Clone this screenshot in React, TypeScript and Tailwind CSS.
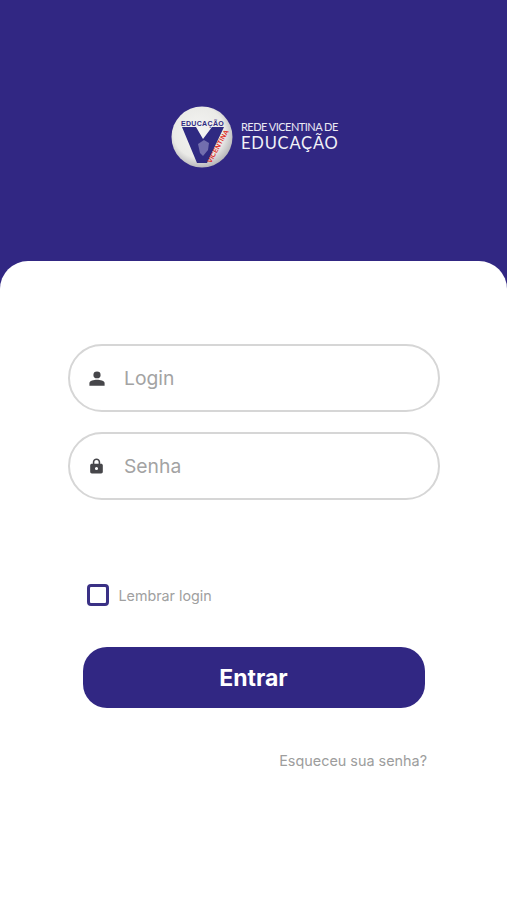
import React from "react";

function LogoMark() {
  return (
    <svg width="62" height="62" viewBox="0 0 62 62" className="shrink-0">
      <defs>
        <radialGradient id="ball" cx="45%" cy="42%" r="60%">
          <stop offset="0%" stopColor="#f5f5f3" />
          <stop offset="70%" stopColor="#eaeae7" />
          <stop offset="100%" stopColor="#b4b3b6" />
        </radialGradient>
      </defs>
      <circle cx="31" cy="31" r="30.5" fill="url(#ball)" />
      <path d="M11 21 L25 21 L32 33 L41 21 L53 21 L36 57 L26 57 Z" fill="#2f2a82" />
      <path d="M27 38 L33 34 L38 37 L37 44 L32 50 L29 47 Z" fill="#8f8cc0" opacity="0.7" />
      <text x="31.5" y="19.5" textAnchor="middle" fontSize="7" fontWeight="800" letterSpacing="0.35" fill="#2f2a82" fontFamily="'Liberation Sans', sans-serif">EDUCAÇÃO</text>
      <text transform="translate(40 57.5) rotate(-61)" fontSize="6.8" fontWeight="800" letterSpacing="0" fill="#e0302a" fontFamily="'Liberation Sans', sans-serif">VICENTINA</text>
    </svg>
  );
}

function UserIcon() {
  return (
    <svg width="16" height="15" viewBox="0 0 16 16" fill="#46464a" preserveAspectRatio="none">
      <circle cx="8" cy="4.2" r="3.6" />
      <path d="M0.4 15.8 V12.8 C0.4 10.4 5 9.3 8 9.3 C11 9.3 15.6 10.4 15.6 12.8 V15.8 Z" />
    </svg>
  );
}

function LockIcon() {
  return (
    <svg width="13" height="16" viewBox="0 0 14 18" fill="#46464a" preserveAspectRatio="none">
      <path fillRule="evenodd" d="M3 6.4 V4.6 C3 2.3 4.8 0.6 7 0.6 C9.2 0.6 11 2.3 11 4.6 V6.4 H12 C13 6.4 13.8 7.2 13.8 8.2 V15.6 C13.8 16.6 13 17.4 12 17.4 H2 C1 17.4 0.2 16.6 0.2 15.6 V8.2 C0.2 7.2 1 6.4 2 6.4 Z M4.7 6.4 H9.3 V4.6 C9.3 3.3 8.3 2.3 7 2.3 C5.7 2.3 4.7 3.3 4.7 4.6 Z M7 10.2 A1.7 1.7 0 1 0 7 13.6 A1.7 1.7 0 1 0 7 10.2 Z" />
    </svg>
  );
}

function Field({ icon, label }: { icon: React.ReactNode; label: string }) {
  return (
    <div className="flex h-[68px] w-[372px] items-center gap-[18.5px] rounded-[34px] border-2 border-[#d6d6d6] bg-white pl-[17.5px]">
      <div className="flex w-[18px] justify-center">{icon}</div>
      <span className="pt-px text-[19.3px] text-[#a3a3a3]">{label}</span>
    </div>
  );
}

export default function App() {
  return (
    <div className="flex h-[900px] w-[507px] flex-col overflow-hidden bg-[#312783] font-['Inter','Liberation_Sans',sans-serif]">
      <header className="flex h-[261px] shrink-0 items-start pl-[171px] pt-[106px]">
        <div className="flex items-center gap-[8px]">
          <LogoMark />
          <div className="mb-[1.5px] flex w-[98px] flex-col font-['Lato','Liberation_Sans',sans-serif]">
            <span className="whitespace-nowrap text-[11px] leading-[13px] tracking-[-0.52px] text-[#e9e8f3]">REDE VICENTINA DE</span>
            <span className="whitespace-nowrap text-[16.5px] leading-[20px] tracking-[0.8px] text-[#f2f2f7]">EDUCAÇÃO</span>
          </div>
        </div>
      </header>

      <main className="flex flex-1 flex-col rounded-t-[28px] bg-white pt-[83px]">
        <div className="flex flex-col gap-[20px] pl-[68px]">
          <Field icon={<UserIcon />} label="Login" />
          <Field icon={<LockIcon />} label="Senha" />
        </div>

        <div className="mt-[84px] flex items-center pl-[87px]">
          <div className="h-[22px] w-[22px] rounded-[4px] border-[3px] border-[#3a3185] bg-white" />
          <span className="ml-[9.5px] pt-px text-[14.3px] text-[#a0a0a0]">Lembrar login</span>
        </div>

        <div className="mt-[41px] flex justify-center">
          <button className="h-[61px] w-[342px] rounded-[24px] bg-[#312783] pt-px text-[23px] font-bold text-white">Entrar</button>
        </div>

        <div className="mt-[42px] flex justify-end pr-[80px]">
          <span className="text-[14.4px] text-[#9d9d9d]">Esqueceu sua senha?</span>
        </div>
      </main>
    </div>
  );
}
